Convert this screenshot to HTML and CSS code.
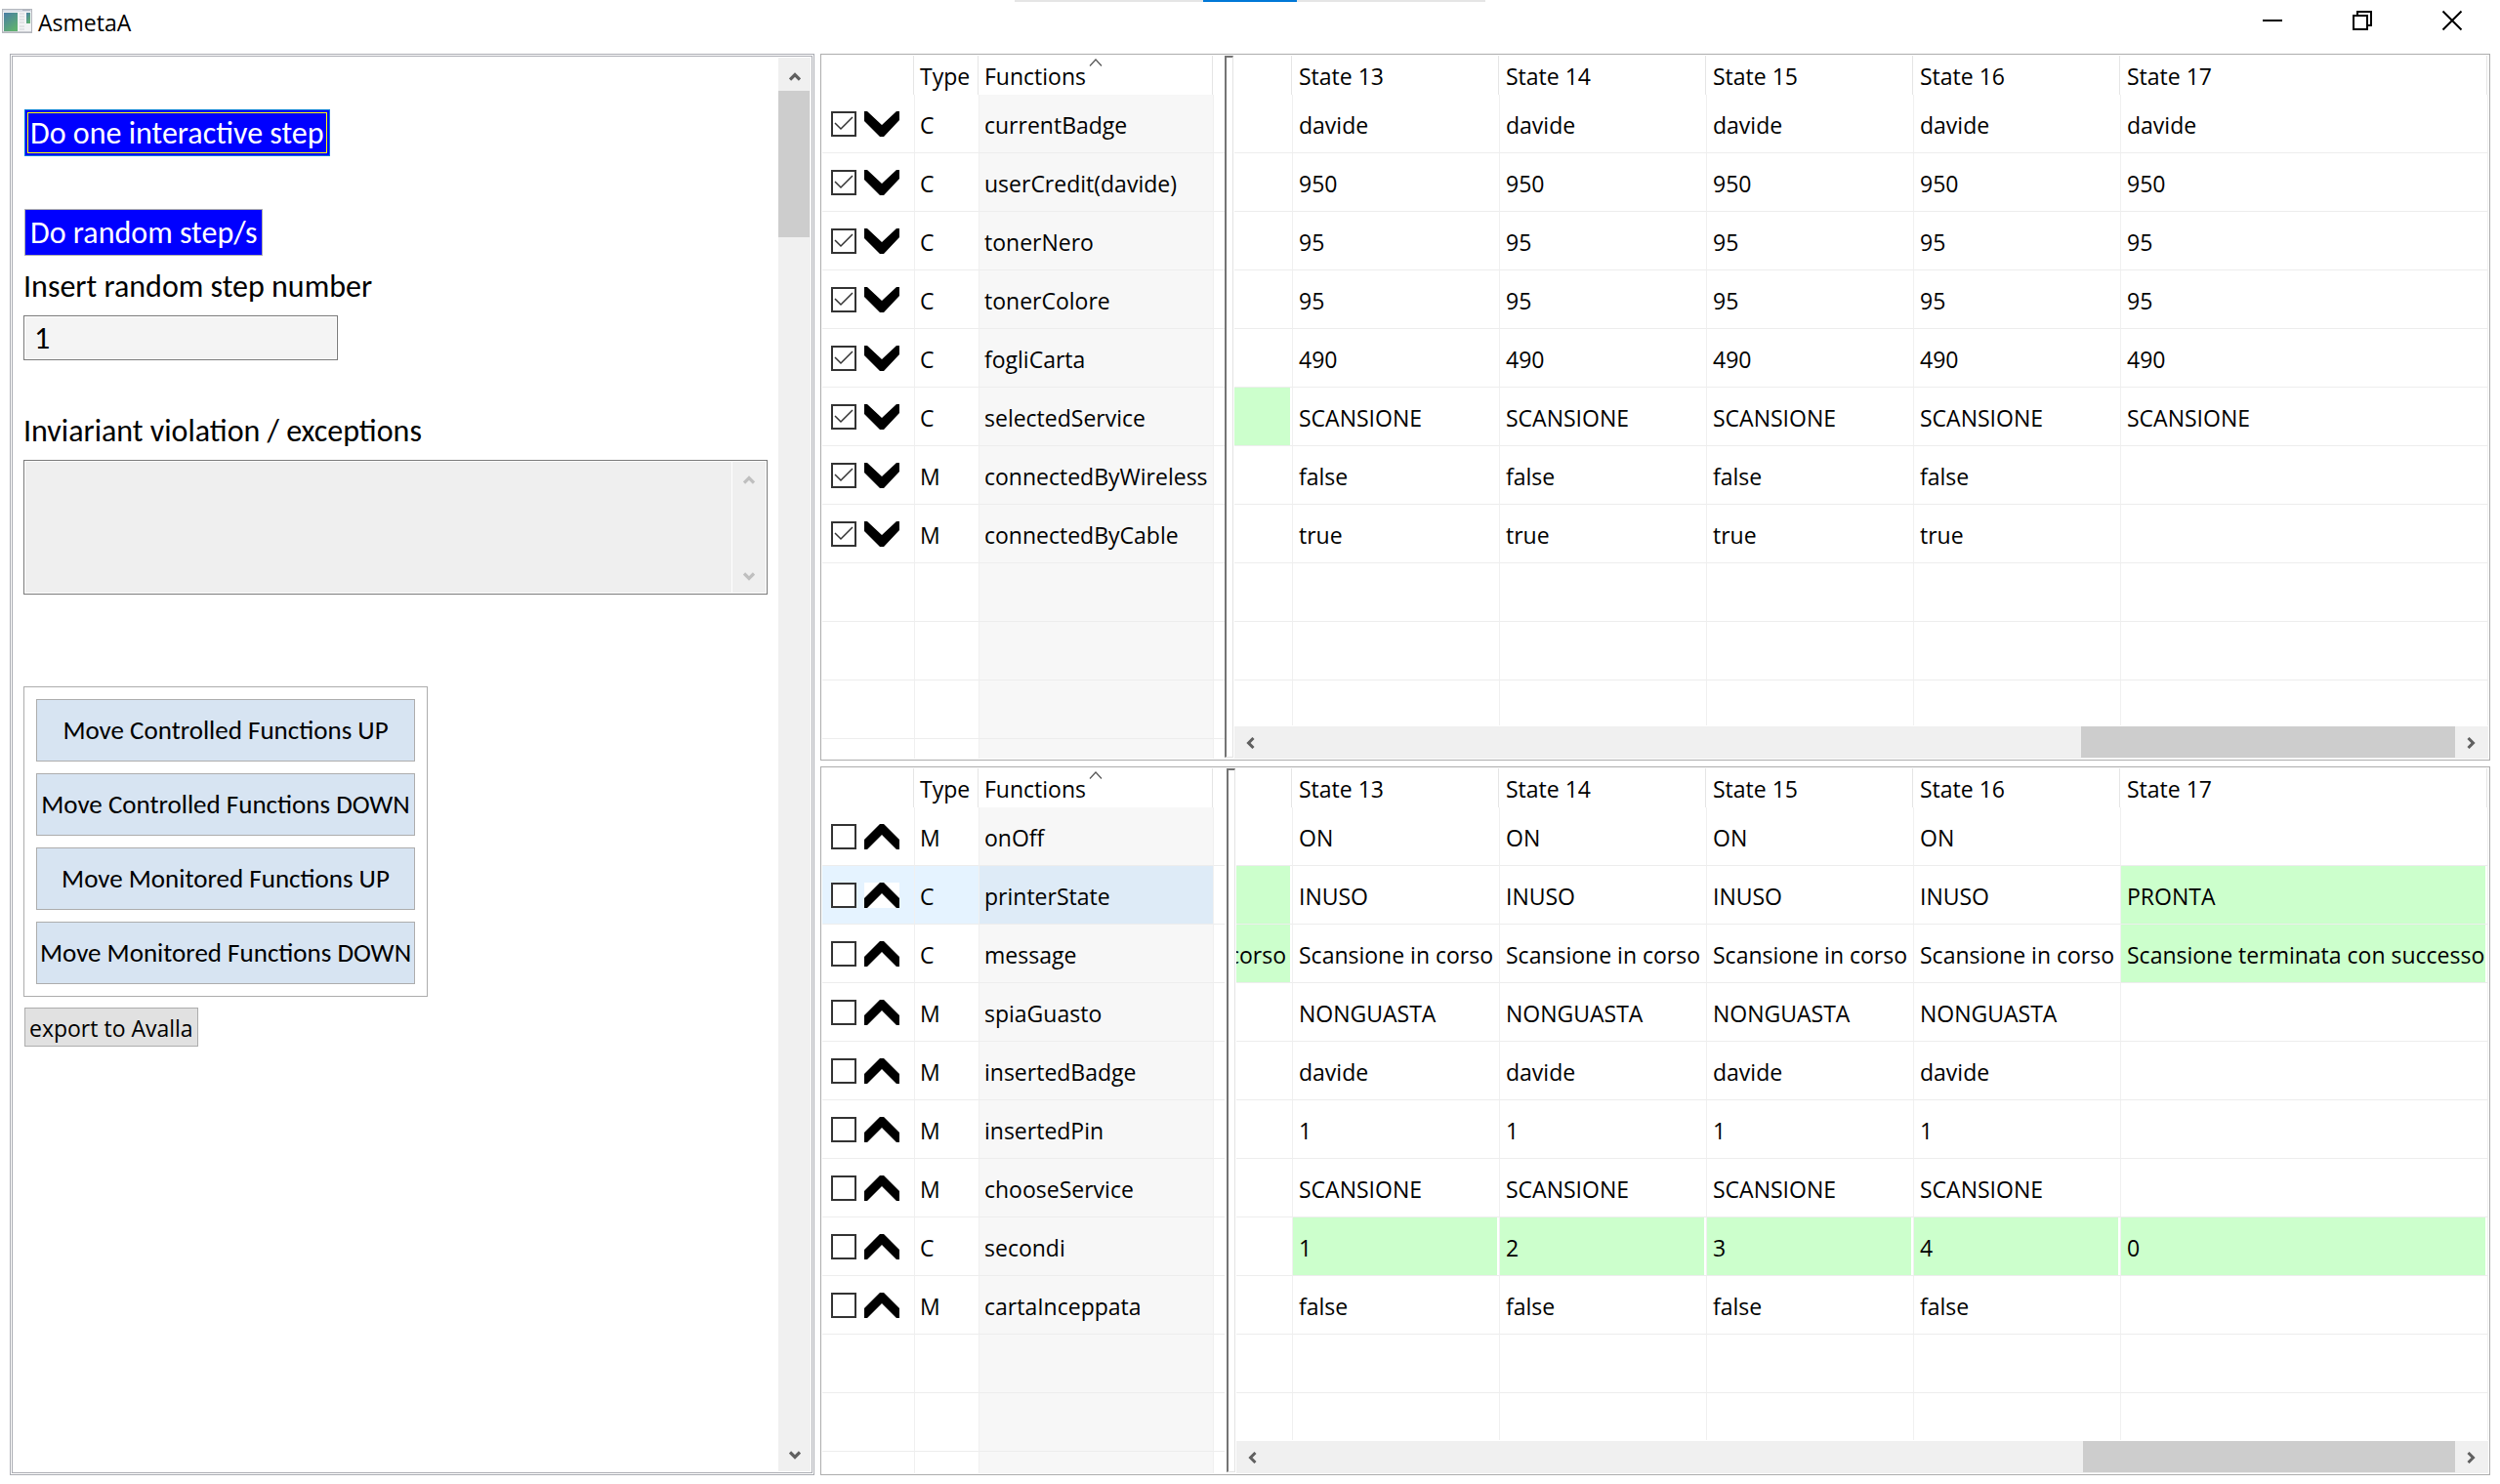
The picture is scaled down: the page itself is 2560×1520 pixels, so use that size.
FILE: index.html
```
<!DOCTYPE html>
<html lang="en">
<head>
<meta charset="utf-8">
<title>AsmetaA</title>
<link rel="stylesheet" href="styles.css">
</head>
<body>
<svg class="defs" aria-hidden="true">
  <symbol id="down" viewBox="0 0 36 26"><path d="M0 0h3L18 14 33 0h3v9L20 26h-4L0 10z"/></symbol>
  <symbol id="up" viewBox="0 0 36 26"><path d="M16 0h4l16 16v10h-3L18 11 3 26H0V16z"/></symbol>
  <symbol id="arrow-up" viewBox="0 0 12 10"><path d="M1 8.500 6 3.500 11 8.500" fill="none" stroke="currentColor" stroke-width="3.200"/></symbol>
  <symbol id="arrow-down" viewBox="0 0 12 10"><path d="M1 1.500 6 6.500 11 1.500" fill="none" stroke="currentColor" stroke-width="3.200"/></symbol>
  <symbol id="arrow-left" viewBox="0 0 10 12"><path d="M8.500 1 3.500 6 8.500 11" fill="none" stroke="currentColor" stroke-width="3"/></symbol>
  <symbol id="arrow-right" viewBox="0 0 10 12"><path d="M1.500 1 6.500 6 1.500 11" fill="none" stroke="currentColor" stroke-width="3"/></symbol>
  <symbol id="sort" viewBox="0 0 14 8"><path d="M1 7.500 7 1 13 7.500" fill="none" stroke="#555" stroke-width="1.200"/></symbol>
</svg>

<div class="snap-bar"><span></span></div>
<header class="titlebar">
  <svg class="app-icon" viewBox="0 0 31 25">
    <defs><linearGradient id="g" x1="0" y1="0" x2="0.600" y2="1"><stop offset="0" stop-color="#4a7da6"/><stop offset="1" stop-color="#5fb070"/></linearGradient></defs>
    <rect x=".5" y=".5" width="30" height="24" fill="#f2f3f5" stroke="#b4b7bd"/>
    <path d="M1 2h29" stroke="#d9dde6" stroke-width="2"/>
    <path d="M21 1.500h8" stroke="#b0b5c2"/>
    <path d="M1 23.500h29" stroke="#c9cbd0"/>
    <rect x="2" y="4" width="14" height="19" fill="url(#g)"/>
    <path d="M18 5h5M18 8h5M18 11h5M18 14h5M18 18h5M18 21h5" stroke="#d0d2d6"/>
    <rect x="25" y="4" width="4" height="11" fill="url(#g)"/>
  </svg>
  <h1>AsmetaA</h1>
  <div class="window-buttons">
    <button type="button" aria-label="Minimize"><svg viewBox="0 0 20 20"><path d="M0 10h20"/></svg></button>
    <button type="button" aria-label="Restore"><svg viewBox="0 0 20 20"><path d="M1 5h14v14H1zM5 5V1h14v14h-4"/></svg></button>
    <button type="button" aria-label="Close"><svg viewBox="0 0 20 20"><path d="M.5.5l19 19M19.500.5l-19 19"/></svg></button>
  </div>
</header>

<main class="workspace">
  <section class="controls">
    <form class="form">
      <button type="button" class="step-button focused">Do one interactive step</button>
      <button type="button" class="step-button random">Do random step/s</button>
      <label class="label-steps" for="steps">Insert random step number</label>
      <input id="steps" class="steps" type="text" value="1">
      <label class="label-violations" for="violations">Inviariant violation / exceptions</label>
      <div class="violations">
        <textarea id="violations" disabled></textarea>
        <div class="violations-scroll"><svg class="arrow-v"><use href="#arrow-up"/></svg><svg class="arrow-v"><use href="#arrow-down"/></svg></div>
      </div>
      <div class="move-group">
        <button type="button">Move Controlled Functions UP</button>
        <button type="button">Move Controlled Functions DOWN</button>
        <button type="button">Move Monitored Functions UP</button>
        <button type="button">Move Monitored Functions DOWN</button>
      </div>
      <button type="button" class="export">export to Avalla</button>
    </form>
    <div class="vscroll"><svg class="arrow-v"><use href="#arrow-up"/></svg><div class="vthumb"></div><svg class="arrow-v"><use href="#arrow-down"/></svg></div>
  </section>

  <div class="tables">
    <section class="panel panel-top">
      <div class="functions">
        <table>
          <colgroup><col class="c-pick"><col class="c-type"><col class="c-name"><col></colgroup>
          <thead><tr><th></th><th>Type</th><th class="sorted">Functions<svg><use href="#sort"/></svg></th><th></th></tr></thead>
          <tbody>
            <tr><td><div class="pick"><input type="checkbox" checked aria-label="currentBadge"><svg><use href="#down"/></svg></div></td><td>C</td><td>currentBadge</td><td></td></tr>
            <tr><td><div class="pick"><input type="checkbox" checked aria-label="userCredit(davide)"><svg><use href="#down"/></svg></div></td><td>C</td><td>userCredit(davide)</td><td></td></tr>
            <tr><td><div class="pick"><input type="checkbox" checked aria-label="tonerNero"><svg><use href="#down"/></svg></div></td><td>C</td><td>tonerNero</td><td></td></tr>
            <tr><td><div class="pick"><input type="checkbox" checked aria-label="tonerColore"><svg><use href="#down"/></svg></div></td><td>C</td><td>tonerColore</td><td></td></tr>
            <tr><td><div class="pick"><input type="checkbox" checked aria-label="fogliCarta"><svg><use href="#down"/></svg></div></td><td>C</td><td>fogliCarta</td><td></td></tr>
            <tr><td><div class="pick"><input type="checkbox" checked aria-label="selectedService"><svg><use href="#down"/></svg></div></td><td>C</td><td>selectedService</td><td></td></tr>
            <tr><td><div class="pick"><input type="checkbox" checked aria-label="connectedByWireless"><svg><use href="#down"/></svg></div></td><td>M</td><td>connectedByWireless</td><td></td></tr>
            <tr><td><div class="pick"><input type="checkbox" checked aria-label="connectedByCable"><svg><use href="#down"/></svg></div></td><td>M</td><td>connectedByCable</td><td></td></tr>
            <tr><td></td><td></td><td></td><td></td></tr>
            <tr><td></td><td></td><td></td><td></td></tr>
            <tr><td></td><td></td><td></td><td></td></tr>
            <tr><td></td><td></td><td></td><td></td></tr>
          </tbody>
        </table>
      </div>
      <div class="sash"></div>
      <div class="states">
        <div class="states-view">
          <table>
            <colgroup><col class="c-state"><col class="c-state"><col class="c-state"><col class="c-state"><col class="c-state"><col class="c-last"></colgroup>
            <thead><tr><th></th><th>State 13</th><th>State 14</th><th>State 15</th><th>State 16</th><th>State 17</th></tr></thead>
            <tbody>
              <tr><td></td><td>davide</td><td>davide</td><td>davide</td><td>davide</td><td>davide</td></tr>
              <tr><td></td><td>950</td><td>950</td><td>950</td><td>950</td><td>950</td></tr>
              <tr><td></td><td>95</td><td>95</td><td>95</td><td>95</td><td>95</td></tr>
              <tr><td></td><td>95</td><td>95</td><td>95</td><td>95</td><td>95</td></tr>
              <tr><td></td><td>490</td><td>490</td><td>490</td><td>490</td><td>490</td></tr>
              <tr><td class="changed"></td><td>SCANSIONE</td><td>SCANSIONE</td><td>SCANSIONE</td><td>SCANSIONE</td><td>SCANSIONE</td></tr>
              <tr><td></td><td>false</td><td>false</td><td>false</td><td>false</td><td></td></tr>
              <tr><td></td><td>true</td><td>true</td><td>true</td><td>true</td><td></td></tr>
              <tr><td></td><td></td><td></td><td></td><td></td><td></td></tr>
              <tr><td></td><td></td><td></td><td></td><td></td><td></td></tr>
              <tr><td></td><td></td><td></td><td></td><td></td><td></td></tr>
            </tbody>
          </table>
        </div>
        <div class="hscroll"><svg class="arrow-h"><use href="#arrow-left"/></svg><div class="hthumb"></div><svg class="arrow-h"><use href="#arrow-right"/></svg></div>
      </div>
    </section>

    <section class="panel panel-bottom">
      <div class="functions">
        <table>
          <colgroup><col class="c-pick"><col class="c-type"><col class="c-name"><col></colgroup>
          <thead><tr><th></th><th>Type</th><th class="sorted">Functions<svg><use href="#sort"/></svg></th><th></th></tr></thead>
          <tbody>
            <tr><td><div class="pick"><input type="checkbox" aria-label="onOff"><svg><use href="#up"/></svg></div></td><td>M</td><td>onOff</td><td></td></tr>
            <tr class="selected"><td><div class="pick"><input type="checkbox" aria-label="printerState"><svg><use href="#up"/></svg></div></td><td>C</td><td>printerState</td><td></td></tr>
            <tr><td><div class="pick"><input type="checkbox" aria-label="message"><svg><use href="#up"/></svg></div></td><td>C</td><td>message</td><td></td></tr>
            <tr><td><div class="pick"><input type="checkbox" aria-label="spiaGuasto"><svg><use href="#up"/></svg></div></td><td>M</td><td>spiaGuasto</td><td></td></tr>
            <tr><td><div class="pick"><input type="checkbox" aria-label="insertedBadge"><svg><use href="#up"/></svg></div></td><td>M</td><td>insertedBadge</td><td></td></tr>
            <tr><td><div class="pick"><input type="checkbox" aria-label="insertedPin"><svg><use href="#up"/></svg></div></td><td>M</td><td>insertedPin</td><td></td></tr>
            <tr><td><div class="pick"><input type="checkbox" aria-label="chooseService"><svg><use href="#up"/></svg></div></td><td>M</td><td>chooseService</td><td></td></tr>
            <tr><td><div class="pick"><input type="checkbox" aria-label="secondi"><svg><use href="#up"/></svg></div></td><td>C</td><td>secondi</td><td></td></tr>
            <tr><td><div class="pick"><input type="checkbox" aria-label="cartaInceppata"><svg><use href="#up"/></svg></div></td><td>M</td><td>cartaInceppata</td><td></td></tr>
            <tr><td></td><td></td><td></td><td></td></tr>
            <tr><td></td><td></td><td></td><td></td></tr>
            <tr><td></td><td></td><td></td><td></td></tr>
          </tbody>
        </table>
      </div>
      <div class="sash"></div>
      <div class="states">
        <div class="states-view">
          <table>
            <colgroup><col class="c-state"><col class="c-state"><col class="c-state"><col class="c-state"><col class="c-state"><col class="c-last"></colgroup>
            <thead><tr><th></th><th>State 13</th><th>State 14</th><th>State 15</th><th>State 16</th><th>State 17</th></tr></thead>
            <tbody>
              <tr><td></td><td>ON</td><td>ON</td><td>ON</td><td>ON</td><td></td></tr>
              <tr><td class="changed"></td><td>INUSO</td><td>INUSO</td><td>INUSO</td><td>INUSO</td><td class="changed">PRONTA</td></tr>
              <tr><td class="changed">Scansione in corso</td><td>Scansione in corso</td><td>Scansione in corso</td><td>Scansione in corso</td><td>Scansione in corso</td><td class="changed">Scansione terminata con successo</td></tr>
              <tr><td></td><td>NONGUASTA</td><td>NONGUASTA</td><td>NONGUASTA</td><td>NONGUASTA</td><td></td></tr>
              <tr><td></td><td>davide</td><td>davide</td><td>davide</td><td>davide</td><td></td></tr>
              <tr><td></td><td>1</td><td>1</td><td>1</td><td>1</td><td></td></tr>
              <tr><td></td><td>SCANSIONE</td><td>SCANSIONE</td><td>SCANSIONE</td><td>SCANSIONE</td><td></td></tr>
              <tr><td></td><td class="changed">1</td><td class="changed">2</td><td class="changed">3</td><td class="changed">4</td><td class="changed">0</td></tr>
              <tr><td></td><td>false</td><td>false</td><td>false</td><td>false</td><td></td></tr>
              <tr><td></td><td></td><td></td><td></td><td></td><td></td></tr>
              <tr><td></td><td></td><td></td><td></td><td></td><td></td></tr>
              <tr><td></td><td></td><td></td><td></td><td></td><td></td></tr>
            </tbody>
          </table>
        </div>
        <div class="hscroll"><svg class="arrow-h"><use href="#arrow-left"/></svg><div class="hthumb"></div><svg class="arrow-h"><use href="#arrow-right"/></svg></div>
      </div>
    </section>
  </div>
</main>
</body>
</html>
```
FILE: styles.css
```
* { box-sizing: border-box; }

body {
  margin: 0;
  height: 100vh;
  display: flex;
  flex-direction: column;
  overflow: hidden;
  background: #fff;
  color: #000;
  font: 23px/40px "Open Sans", "Noto Sans", sans-serif;
}

button, input, textarea { font: inherit; color: inherit; margin: 0; border-radius: 0; }
svg { display: block; flex: none; }
.defs { position: absolute; width: 0; height: 0; }

/* Handle that hangs over the top edge of the window */
.snap-bar {
  position: absolute;
  top: 0;
  left: 50%;
  width: 482px;
  height: 2px;
  transform: translateX(-50%);
  background: #e5e5e5;
}
.snap-bar span { display: block; width: 96px; height: 2px; margin: 0 auto; background: #0078d7; }

/* Title bar */
.titlebar { flex: none; display: flex; align-items: flex-start; height: 55px; padding-left: 2px; }
.app-icon { width: 31px; height: 25px; margin-top: 9px; }
.titlebar h1 { margin: 3px 0 0 6px; font-size: 23px; font-weight: 400; }
.window-buttons { display: flex; margin-left: auto; padding-right: 3px; }
.window-buttons button {
  display: flex;
  align-items: center;
  justify-content: center;
  width: 92px;
  height: 42px;
  padding: 0;
  border: 0;
  background: none;
}
.window-buttons svg { width: 20px; height: 20px; overflow: visible; fill: none; stroke: #000; stroke-width: 2; }

/* Main split */
.workspace {
  flex: 1;
  min-height: 0;
  display: grid;
  grid-template-columns: minmax(0, 824fr) minmax(0, 1710fr);
  grid-template-rows: minmax(0, 1fr);
  gap: 6px;
  padding: 0 10px 9px;
}

/* Left side */
.controls { display: flex; border: 3px double #abadb3; }
.form {
  flex: 1;
  min-width: 0;
  display: flex;
  flex-direction: column;
  align-items: flex-start;
  padding: 54px 11px 0;
  font: 32px/42px Carlito, Calibri, "Open Sans", sans-serif;
}
.step-button {
  height: 48px;
  margin-left: 1px;
  padding: 1px 5px 0;
  border: 1px solid #adadad;
  background: #00f;
  color: #fff;
  white-space: nowrap;
}
.step-button.focused { border-color: #0078d7; outline: 1px solid #ff0; outline-offset: -4px; }
.random { margin-top: 54px; }
.label-steps { margin-top: 11px; }
.steps {
  width: 322px;
  height: 46px;
  margin-top: 8px;
  padding: 0 10px;
  border: 1px solid #7a7a7a;
  background: #f4f4f4;
  box-shadow: inset 0 0 0 1px #fff;
}
.label-violations { margin-top: 52px; }
.violations {
  display: flex;
  width: 100%;
  height: 138px;
  margin-top: 8px;
  padding: 1px;
  border: 1px solid #7a7a7a;
}
.violations textarea { flex: 1; min-width: 0; padding: 4px; border: 0; background: #efefef; resize: none; }
.violations-scroll {
  display: flex;
  flex-direction: column;
  justify-content: space-between;
  align-items: center;
  width: 35px;
  padding: 13px 0 11px;
  border-left: 1px solid #fff;
  background: #efefef;
  color: #bfbfbf;
}
.arrow-v { width: 12px; height: 10px; }
.arrow-h { width: 10px; height: 12px; }
.move-group {
  display: flex;
  flex-direction: column;
  gap: 12px;
  width: 414px;
  margin-top: 94px;
  padding: 12px;
  border: 1px solid #adadad;
  font-size: 27px;
}
.move-group button { height: 64px; padding: 0; border: 1px solid #adadad; background: #d7e4f2; white-space: nowrap; }
.export {
  height: 40px;
  margin: 11px 0 0 1px;
  padding: 1px 4px 0;
  border: 1px solid #adadad;
  background: #e1e1e1;
  font: 23px/38px "Open Sans", "Noto Sans", sans-serif;
}
.vscroll {
  display: flex;
  flex-direction: column;
  align-items: center;
  width: 33px;
  margin: 1px 1px 1px 0;
  padding: 14px 0 11px;
  background: #f0f0f0;
  color: #606060;
}
.vthumb { width: 32px; height: 150px; margin: 10px 1px auto 0; background: #cdcdcd; }

/* Right side */
.tables { display: flex; flex-direction: column; gap: 6px; min-height: 0; }
.panel { display: flex; min-height: 0; padding: 1px; border: 1px solid #adadad; }
.panel-top { flex: 724 1 0; }
.panel-bottom { flex: 726 1 0; }
.functions { flex: none; width: 412px; overflow: hidden; }
.sash {
  flex: none;
  width: 9px;
  margin: 0 1px 1px 0;
  border: 1px solid #e3e3e3;
  border-left: 2px solid #747474;
  border-top: 2px solid #747474;
}
.panel-bottom .sash { margin-left: 2px; }
.states { flex: 1; min-width: 0; display: flex; flex-direction: column; }
.states-view { flex: 1; min-height: 0; display: flex; justify-content: flex-end; align-items: flex-start; overflow: hidden; }

table { table-layout: fixed; border-collapse: separate; border-spacing: 0; white-space: nowrap; }
.functions table { width: 412px; }
.states table { flex: none; width: 1436px; }
.c-pick { width: 95px; }
.c-type { width: 66px; }
.c-name { width: 240px; }
.c-state { width: 212px; }
.c-last { width: 376px; }
th, td { padding: 2px 0 0 5px; text-align: left; font-weight: 400; }
.states th, .states td { padding-left: 6px; }
th { position: relative; height: 40px; line-height: 38px; border-right: 1px solid transparent; box-shadow: inset -1px 0 #e5e5e5; }
.functions th:last-child { box-shadow: none; }
td { height: 60px; border-right: 1px solid #f0f0f0; border-bottom: 1px solid #ededed; }
.functions td:last-child { border-right: 0; }
.functions td:nth-child(3) { background: #f7f7f7; }
.selected td:nth-child(-n+2) { background: #e5f3ff; }
.functions .selected td:nth-child(3) { background: #deebf7; }
td.changed { background: #cfc; box-shadow: inset -2px 0 #fff; }
.sorted svg { position: absolute; top: 3px; left: 50%; width: 14px; height: 8px; margin-left: -8px; }

.functions td:first-child { padding: 0 0 0 9px; }
.pick { display: flex; align-items: center; gap: 8px; }
.pick svg { width: 36px; height: 26px; background: #fff; }
.pick input { appearance: none; width: 26px; height: 26px; border: 2px solid #333; background: #fff; }
.pick input:checked {
  background: #fff url("data:image/svg+xml,%3Csvg xmlns='http://www.w3.org/2000/svg' viewBox='0 0 22 22'%3E%3Cpath d='M2 10l6 6L20 4' fill='none' stroke='%23333' stroke-width='1.500'/%3E%3C/svg%3E") center / 22px 22px no-repeat;
}

.hscroll {
  flex: none;
  display: flex;
  align-items: center;
  height: 34px;
  padding: 0 12px 0 11px;
  border-top: 1px solid #fff;
  background: #f0f0f0;
  color: #606060;
}
.hthumb { width: 383px; height: 32px; margin: 0 12px 1px auto; background: #cdcdcd; }
.panel-bottom .hthumb { width: 381px; }
```
